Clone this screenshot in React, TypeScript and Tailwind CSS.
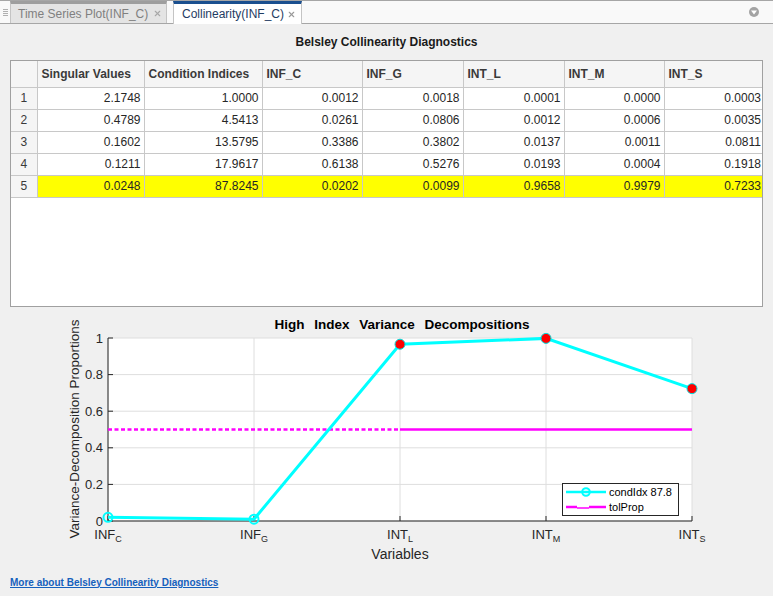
import { X } from 'lucide-react';

const headers = ['Singular Values', 'Condition Indices', 'INF_C', 'INF_G', 'INT_L', 'INT_M', 'INT_S'];
const colWidths = [26, 107, 118, 100, 101, 101, 100, 100];

const rows = [
  ['2.1748', '1.0000', '0.0012', '0.0018', '0.0001', '0.0000', '0.0003'],
  ['0.4789', '4.5413', '0.0261', '0.0806', '0.0012', '0.0006', '0.0035'],
  ['0.1602', '13.5795', '0.3386', '0.3802', '0.0137', '0.0011', '0.0811'],
  ['0.1211', '17.9617', '0.6138', '0.5276', '0.0193', '0.0004', '0.1918'],
  ['0.0248', '87.8245', '0.0202', '0.0099', '0.9658', '0.9979', '0.7233'],
];

// plot geometry (page coordinates, svg viewBox starts at y=307)
const L = 108;
const R = 692;
const T = 338;
const B = 521;
const xs = [108, 254, 400, 546, 692];
const yOf = (v: number) => B - v * (B - T);
const vals = [0.0202, 0.0099, 0.9658, 0.9979, 0.7233];
const xLabels: [string, string][] = [['INF', 'C'], ['INF', 'G'], ['INT', 'L'], ['INT', 'M'], ['INT', 'S']];
const yTicks = [0, 0.2, 0.4, 0.6, 0.8, 1];

function Chart() {
  const pts = vals.map((v, i) => `${xs[i]},${yOf(v)}`).join(' ');
  return (
    <svg width="773" height="263" viewBox="0 307 773 263" className="block" style={{ fontFamily: '"Liberation Sans", Arial, sans-serif' }}>
      <rect x={L} y={T} width={R - L} height={B - T} fill="#fff" />
      {/* grid */}
      {yTicks.map(t => (
        <line key={t} x1={L} x2={R} y1={yOf(t)} y2={yOf(t)} stroke="#dedede" strokeWidth="1" />
      ))}
      {xs.map(x => (
        <line key={x} x1={x} x2={x} y1={T} y2={B} stroke="#dedede" strokeWidth="1" />
      ))}
      {/* axes */}
      <line x1={L} x2={L} y1={T} y2={B} stroke="#262626" strokeWidth="1" />
      <line x1={L} x2={R} y1={B} y2={B} stroke="#262626" strokeWidth="1" />
      {yTicks.map(t => (
        <line key={'yt' + t} x1={L} x2={L + 5} y1={yOf(t)} y2={yOf(t)} stroke="#262626" />
      ))}
      {xs.map(x => (
        <line key={'xt' + x} x1={x} x2={x} y1={B} y2={B - 5} stroke="#262626" />
      ))}
      {/* tolProp */}
      <line x1={L} x2={400} y1={yOf(0.5)} y2={yOf(0.5)} stroke="#ff00ff" strokeWidth="2.5" strokeDasharray="4 2.5" />
      <line x1={400} x2={R} y1={yOf(0.5)} y2={yOf(0.5)} stroke="#ff00ff" strokeWidth="2.5" />
      {/* condIdx */}
      <polyline points={pts} fill="none" stroke="#00ffff" strokeWidth="3" />
      {vals.map((v, i) =>
        v < 0.5 ? (
          <circle key={i} cx={xs[i]} cy={yOf(v)} r="4.5" fill="none" stroke="#00ffff" strokeWidth="2" />
        ) : (
          <circle key={i} cx={xs[i]} cy={yOf(v)} r="5" fill="#ff0000" stroke="#00e0e0" strokeWidth="1" />
        )
      )}
      {/* tick labels */}
      {yTicks.map(t => (
        <text key={'yl' + t} x={103} y={yOf(t) + 4.5} textAnchor="end" fontSize="13" fill="#262626">
          {t === 0 || t === 1 ? String(t) : t.toFixed(1)}
        </text>
      ))}
      {xLabels.map(([a, b], i) => (
        <text key={a + b} x={xs[i]} y={539} textAnchor="middle" fontSize="13" fill="#262626">
          {a}
          <tspan fontSize="9" dy="3">{b}</tspan>
        </text>
      ))}
      <text x={400} y={559} textAnchor="middle" fontSize="14" fill="#262626">Variables</text>
      <text transform="translate(79 429) rotate(-90)" textAnchor="middle" fontSize="13.5" fill="#262626">
        Variance-Decomposition Proportions
      </text>
      <text x={402} y={329} textAnchor="middle" fontSize="13.5" fontWeight="bold" fill="#000" wordSpacing="6">
        High Index Variance Decompositions
      </text>
      {/* legend */}
      <rect x={562.5} y={483.5} width={116} height={32} fill="#fff" stroke="#262626" strokeWidth="1" />
      <line x1={566} x2={606} y1={492} y2={492} stroke="#00ffff" strokeWidth="2.5" />
      <circle cx={586} cy={492} r="3.8" fill="none" stroke="#00ffff" strokeWidth="2" />
      <text x={609} y={496} fontSize="11" fill="#000">condIdx 87.8</text>
      <line x1={566} x2={577} y1={507} y2={507} stroke="#ff00ff" strokeWidth="2.5" />
      <line x1={577} x2={589} y1={508} y2={508} stroke="#ff00ff" strokeWidth="1.5" />
      <line x1={589} x2={606} y1={507} y2={507} stroke="#ff00ff" strokeWidth="2.5" />
      <text x={609} y={511} fontSize="11" fill="#000">tolProp</text>
    </svg>
  );
}

export default function App() {
  return (
    <div className="w-[773px] h-[596px] bg-[#f0f0f0] overflow-hidden font-['Liberation_Sans',Arial,sans-serif] text-[#262626]">
      {/* TAB BAR */}
      <div className="h-[24px] flex items-stretch bg-[#f9f9f9] border-t border-b border-[#a6a6a6]">
        <div className="w-[10px] flex flex-col justify-center items-center gap-[1px]">
          {[0, 1, 2, 3].map(i => (
            <div key={i} className="w-[5px] h-px bg-[#b0b0b0]" />
          ))}
        </div>
        <div className="w-[157px] flex items-center justify-between pl-[7px] pr-[4px] bg-[#e4e4e4] border-t-[3px] border-t-[#9e9e9e] border-x border-x-[#c4c4c4] text-[12px] text-[#808080]">
          <span>Time Series Plot(INF_C)</span>
          <X className="w-[9px] h-[9px] text-[#a8a8a8]" strokeWidth={3} />
        </div>
        <div className="w-[6px]" />
        <div className="w-[129px] flex items-center justify-between pl-[8px] pr-[5px] bg-white border-t-[3px] border-t-[#1a4f8f] border-x border-x-[#c4c4c4] text-[12px] text-[#1f3c63] -mb-px">
          <span>Collinearity(INF_C)</span>
          <X className="w-[9px] h-[9px] text-[#9a9a9a]" strokeWidth={3} />
        </div>
        <div className="flex-1 flex items-center justify-end pr-[14px]">
          <div className="w-[10px] h-[10px] rounded-full bg-[#a3a3a3] flex items-center justify-center">
            <svg width="6" height="5" viewBox="0 0 6 5">
              <path d="M0 0.5 L6 0.5 L3 4.5 Z" fill="#fff" />
            </svg>
          </div>
        </div>
      </div>

      {/* TITLE */}
      <div className="h-[36px] flex items-center justify-center text-[12px] font-bold text-[#1a1a1a]">
        Belsley Collinearity Diagnostics
      </div>

      {/* TABLE */}
      <div className="mx-[10px] h-[247px] bg-white border border-[#a0a0a0] overflow-hidden">
        <table className="table-fixed border-collapse w-[753px] text-[12px]">
          <colgroup>
            {colWidths.map((w, i) => (
              <col key={i} style={{ width: w }} />
            ))}
          </colgroup>
          <thead>
            <tr className="h-[26px] bg-[#f5f5f5]">
              <th className="border-r border-b border-[#c8c8c8]" />
              {headers.map((h, i) => (
                <th
                  key={h}
                  className={`text-left font-bold text-[#3a3a3a] pl-[4px] border-b border-[#c8c8c8] ${i < headers.length - 1 ? 'border-r' : ''}`}
                >
                  {h}
                </th>
              ))}
            </tr>
          </thead>
          <tbody>
            {rows.map((r, ri) => {
              const hl = ri === 4;
              return (
                <tr key={ri} className="h-[22px]">
                  <td className="bg-[#f5f5f5] text-center text-[#3a3a3a] border-r border-b border-[#c8c8c8]">{ri + 1}</td>
                  {r.map((c, ci) => (
                    <td
                      key={ci}
                      className={`text-right pr-[3px] border-b border-[#c8c8c8] ${ci < r.length - 1 ? 'border-r' : ''} ${hl ? 'bg-[#ffff00]' : ''}`}
                    >
                      {c}
                    </td>
                  ))}
                </tr>
              );
            })}
          </tbody>
        </table>
      </div>

      {/* CHART */}
      <Chart />

      {/* LINK */}
      <div className="h-[24px] flex items-center pl-[10px]">
        <a href="#" className="text-[10px] font-bold text-[#1560bd] underline">
          More about Belsley Collinearity Diagnostics
        </a>
      </div>
    </div>
  );
}
